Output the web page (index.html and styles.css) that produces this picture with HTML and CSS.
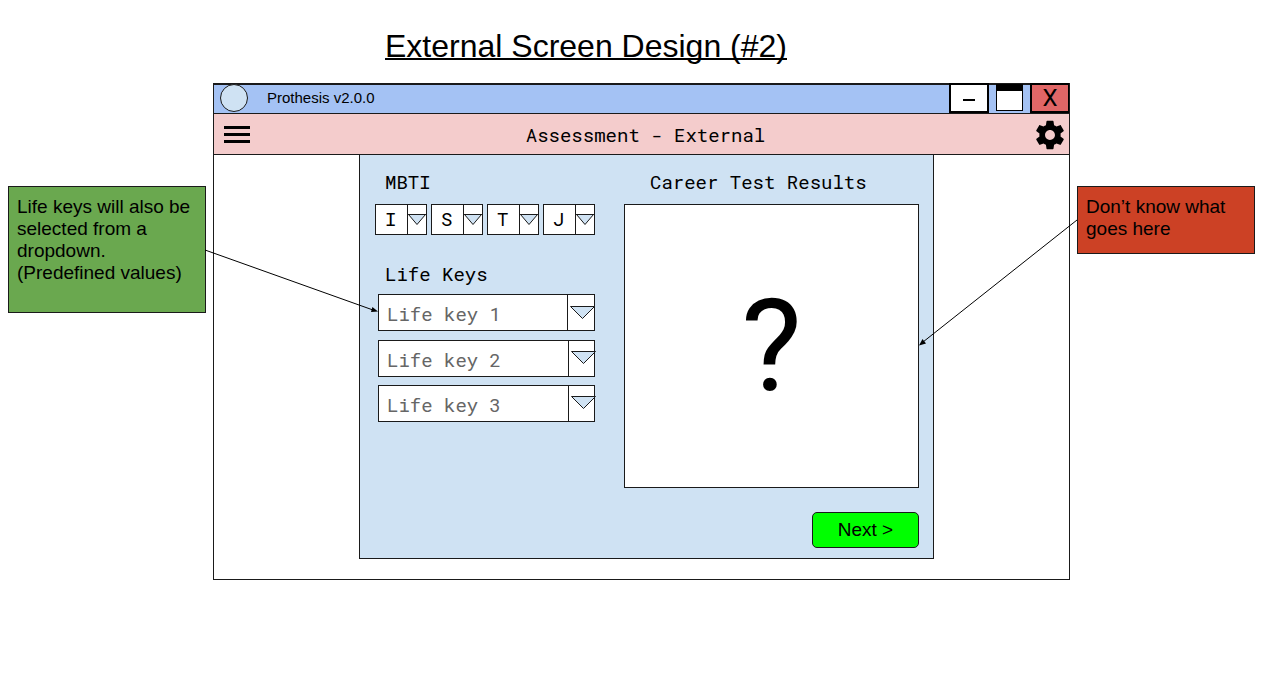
FILE: index.html
```html
<!DOCTYPE html>
<html lang="en">
<head>
<meta charset="utf-8">
<title>External Screen Design (#2)</title>
<link rel="stylesheet" href="styles.css">
</head>
<body>
<h1 class="page-title">External Screen Design (#2)</h1>
<div class="board">
  <aside class="note note-green">
    <p>Life keys will also be selected from a dropdown. (Predefined values)</p>
    <svg class="arrow arrow-right" width="174" height="70" viewBox="0 0 174 70" aria-hidden="true">
      <path d="M0 4L168 64" fill="none" stroke="#000"/>
      <path d="M173 65.500L166 66L167.400 61Z"/>
    </svg>
  </aside>

  <main class="window">
    <header class="titlebar">
      <span class="app-logo"></span>
      <span class="app-name">Prothesis v2.0.0</span>
      <button class="win-btn minimize" aria-label="Minimize"><span class="dash"></span></button>
      <button class="maximize" aria-label="Maximize"></button>
      <button class="win-btn close" aria-label="Close">X</button>
    </header>
    <div class="toolbar">
      <button class="icon-btn" aria-label="Menu">
        <svg width="26" height="18" viewBox="0 0 26 18" aria-hidden="true"><path d="M0 0h26v3H0zM0 7h26v3H0zM0 14h26v3H0z"/></svg>
      </button>
      <h2 class="screen-title">Assessment - External</h2>
      <button class="icon-btn" aria-label="Settings">
        <svg width="34" height="34" viewBox="0 0 24 24" aria-hidden="true"><path d="M19.430 12.980c.04-.32.07-.64.07-.98s-.03-.66-.07-.98l2.110-1.650c.19-.15.24-.42.12-.64l-2-3.460c-.12-.22-.39-.3-.61-.22l-2.490 1c-.52-.4-1.080-.73-1.690-.98l-.38-2.650C14.460 2.180 14.250 2 14 2h-4c-.25 0-.46.18-.49.42l-.38 2.650c-.61.25-1.170.59-1.690.98l-2.490-1c-.23-.09-.49 0-.61.22l-2 3.460c-.13.22-.07.49.12.64l2.110 1.650c-.04.32-.07.65-.07.98s.03.66.07.98l-2.110 1.650c-.19.15-.24.42-.12.64l2 3.460c.12.22.39.3.61.22l2.490-1c.52.4 1.080.73 1.690.98l.38 2.650c.03.24.24.42.49.42h4c.25 0 .46-.18.49-.42l.38-2.650c.61-.25 1.170-.59 1.690-.98l2.490 1c.23.09.49 0 .61-.22l2-3.460c.12-.22.07-.49-.12-.64l-2.110-1.650zM12 15.500c-1.930 0-3.500-1.570-3.500-3.500s1.570-3.500 3.500-3.500 3.500 1.570 3.500 3.500-1.570 3.500-3.500 3.500z"/></svg>
      </button>
    </div>
    <div class="content">
      <form class="panel">
        <section class="traits">
          <h3 class="label">MBTI</h3>
          <div class="mbti">
            <div class="mini"><select aria-label="MBTI letter 1"><option>I</option></select><svg class="mini-arrow" width="20" height="31" viewBox="0 0 20 31" aria-hidden="true"><path d="M.5 0v31M0 10.500h20" stroke="#1a1a1a"/><path d="M1.500 10.500h17L10 20.500z" fill="#cfe2f3" stroke="#1a1a1a"/></svg></div>
            <div class="mini"><select aria-label="MBTI letter 2"><option>S</option></select><svg class="mini-arrow" width="20" height="31" viewBox="0 0 20 31" aria-hidden="true"><path d="M.5 0v31M0 10.500h20" stroke="#1a1a1a"/><path d="M1.500 10.500h17L10 20.500z" fill="#cfe2f3" stroke="#1a1a1a"/></svg></div>
            <div class="mini"><select aria-label="MBTI letter 3"><option>T</option></select><svg class="mini-arrow" width="20" height="31" viewBox="0 0 20 31" aria-hidden="true"><path d="M.5 0v31M0 10.500h20" stroke="#1a1a1a"/><path d="M1.500 10.500h17L10 20.500z" fill="#cfe2f3" stroke="#1a1a1a"/></svg></div>
            <div class="mini"><select aria-label="MBTI letter 4"><option>J</option></select><svg class="mini-arrow" width="20" height="31" viewBox="0 0 20 31" aria-hidden="true"><path d="M.5 0v31M0 10.500h20" stroke="#1a1a1a"/><path d="M1.500 10.500h17L10 20.500z" fill="#cfe2f3" stroke="#1a1a1a"/></svg></div>
          </div>
          <h3 class="label label-keys">Life Keys</h3>
          <div class="keys">
            <div class="key"><select aria-label="Life key 1"><option>Life key 1</option></select><svg class="key-arrow" width="28" height="37" viewBox="0 0 28 37" aria-hidden="true"><path d="M.5 0v36" stroke="#1a1a1a"/><path d="M3.500 12.500h24L15.500 24.500z" fill="#cfe2f3" stroke="#1a1a1a"/></svg></div>
            <div class="key"><select aria-label="Life key 2"><option>Life key 2</option></select><svg class="key-arrow" width="28" height="37" viewBox="0 0 28 37" aria-hidden="true"><path d="M1.500 0v36" stroke="#1a1a1a"/><path d="M4.500 11.500h24L16.500 23.500z" fill="#cfe2f3" stroke="#1a1a1a"/></svg></div>
            <div class="key"><select aria-label="Life key 3"><option>Life key 3</option></select><svg class="key-arrow" width="28" height="37" viewBox="0 0 28 37" aria-hidden="true"><path d="M1.500 0v36" stroke="#1a1a1a"/><path d="M4.500 11.500h24L16.500 23.500z" fill="#cfe2f3" stroke="#1a1a1a"/></svg></div>
          </div>
        </section>
        <section class="results">
          <h3 class="label label-results">Career Test Results</h3>
          <div class="result-box">?</div>
          <button class="next" type="button">Next &gt;</button>
        </section>
      </form>
    </div>
  </main>

  <aside class="note note-red">
    <p>Don’t know what goes here</p>
    <svg class="arrow arrow-left" width="159" height="130" viewBox="0 0 159 130" aria-hidden="true">
      <path d="M158 2L4 124" fill="none" stroke="#000"/>
      <path d="M0 127.500L3.500 121L7 125.500Z"/>
    </svg>
  </aside>
</div>
</body>
</html>
```

FILE: styles.css
```css
* {
  box-sizing: border-box;
}

body {
  margin: 0;
  background: #fff;
  color: #000;
  font-family: "Liberation Sans", Arial, sans-serif;
  font-size: 19px;
}

h1, h2, h3, p {
  margin: 0;
  font-weight: normal;
}

button, select {
  margin: 0;
  padding: 0;
  color: inherit;
  font: inherit;
}

.page-title {
  padding: 26px 89px 17px 0;
  font-size: 32px;
  line-height: 40px;
  text-align: center;
  text-decoration: underline 2px;
  text-decoration-skip-ink: none;
}

.board {
  display: grid;
  grid-template-columns: 198px minmax(0, 1fr) 178px;
  align-items: start;
  gap: 7px;
  padding: 0 6px 0 8px;
}

.note {
  position: relative;
  margin-top: 103px;
  padding: 9px 8px;
  border: 1px solid #1a1a1a;
  line-height: 22px;
}

.note-green {
  padding-bottom: 28px;
  background: #6aa84f;
}

.note-red {
  padding-bottom: 13px;
  background: #cc4125;
}

.arrow {
  position: absolute;
  z-index: 1;
  pointer-events: none;
}

.arrow-right {
  top: 59px;
  left: 100%;
}

.arrow-left {
  top: 31px;
  right: 100%;
}

.window {
  border: 1px solid #1a1a1a;
  border-top: 0;
  background: #fff;
}

.titlebar {
  display: flex;
  align-items: flex-start;
  height: 31px;
  padding-left: 6px;
  border-bottom: 1px solid #1a1a1a;
  background: #a4c2f4;
  box-shadow: inset 0 2px #1a1a1a;
}

.app-logo {
  width: 28px;
  height: 28px;
  margin-top: 1px;
  border: 1px solid #1a1a1a;
  border-radius: 50%;
  background: #cfe2f3;
}

.app-name {
  flex: 1;
  padding-left: 19px;
  font-size: 15px;
  line-height: 30px;
}

.win-btn {
  display: flex;
  align-items: center;
  justify-content: center;
  width: 40px;
  height: 30px;
  border: 2px solid #000;
  background: #fff;
}

.dash {
  width: 12px;
  height: 2px;
  margin-top: 3px;
  background: #000;
}

.maximize {
  width: 27px;
  height: 27px;
  margin: 1px 7px 0;
  border: 1px solid #000;
  border-top-width: 7px;
  background: #fff;
}

.close {
  width: 39px;
  border-right-width: 1px;
  background: #e06666;
  font-family: Roboto, sans-serif;
  font-size: 24px;
}

.toolbar {
  display: flex;
  align-items: center;
  height: 41px;
  padding: 1px 2px 0 10px;
  border-bottom: 1px solid #1a1a1a;
  background: #f4cccc;
}

.icon-btn {
  display: flex;
  border: 0;
  background: none;
}

.screen-title {
  flex: 1;
  padding-left: 8px;
  text-align: center;
}

.screen-title, .label, .mini select, .key select {
  font-family: "Roboto Mono", "DejaVu Sans Mono", "Liberation Mono", monospace;
  font-size: 19px;
}

.content {
  padding: 0 135px 20px 145px;
}

.panel {
  display: grid;
  grid-template-columns: 220px minmax(0, 1fr);
  column-gap: 29px;
  padding: 0 14px 10px 15px;
  border: 1px solid #1a1a1a;
  border-top: 0;
  background: #cfe2f3;
}

.label {
  padding: 15px 0 10px 10px;
  line-height: 24px;
}

.label-keys {
  padding-top: 27px;
  padding-bottom: 8px;
}

.label-results {
  padding-left: 26px;
}

.mbti {
  display: flex;
  gap: 4px;
}

.mini {
  position: relative;
  flex: 1;
}

.mini select, .key select {
  display: block;
  width: 100%;
  border: 1px solid #1a1a1a;
  border-radius: 0;
  appearance: none;
  background: #fff;
}

.mini select {
  height: 31px;
  padding: 0 0 2px 9px;
}

.mini-arrow, .key-arrow {
  position: absolute;
  top: 0;
  right: 0;
  overflow: visible;
  pointer-events: none;
}

.keys {
  display: grid;
  align-content: space-between;
  height: 128px;
  margin-left: 3px;
}

.key {
  position: relative;
}

.key select {
  height: 37px;
  padding: 2px 0 0 8px;
  color: #666;
}

.results {
  display: flex;
  flex-direction: column;
}

.result-box {
  display: flex;
  align-items: center;
  justify-content: center;
  height: 284px;
  border: 1px solid #1a1a1a;
  background: #fff;
  font-family: Roboto, sans-serif;
  font-size: 128px;
}

.next {
  align-self: flex-end;
  width: 107px;
  height: 36px;
  margin-top: 24px;
  border: 1px solid #1a1a1a;
  border-radius: 5px;
  background: #0f0;
}
```
